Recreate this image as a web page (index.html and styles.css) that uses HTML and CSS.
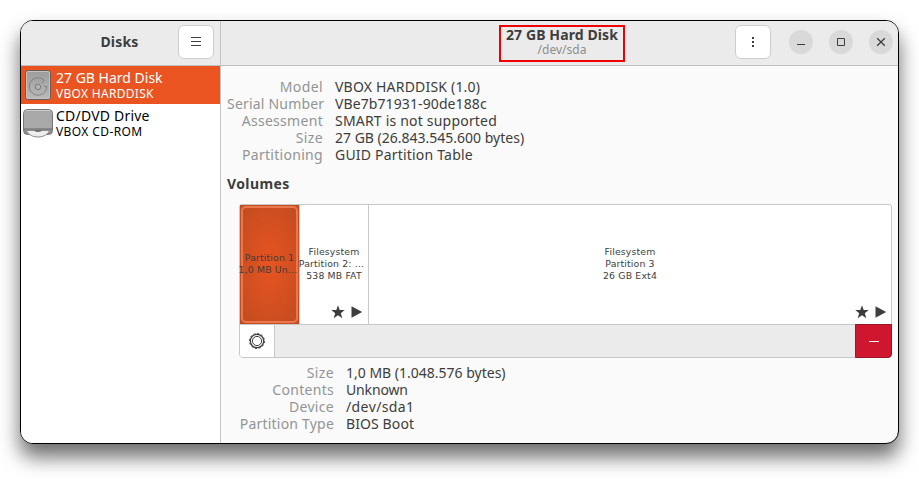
FILE: index.html
```html
<!DOCTYPE html>
<html lang="en">
<head>
<meta charset="utf-8">
<title>Disks</title>
<link rel="stylesheet" href="styles.css">
</head>
<body>
<div class="window">
  <aside class="sidebar">
    <header class="bar side-bar">
      <h1 class="title t2">Disks</h1>
      <button class="btn" aria-label="Menu">
        <svg width="12" height="12" viewBox="0 0 12 12"><path d="M1 1.500h10M1 5.500h10M1 9.500h10" stroke="#3d3d3d"/></svg>
      </button>
    </header>
    <ul class="devices">
      <li class="device selected">
        <svg class="icon" width="32" height="32" viewBox="0 0 32 32">
          <defs><linearGradient id="metal" x1="0" y1="0" x2="0" y2="1"><stop offset="0" stop-color="#9c9c9c"/><stop offset="1" stop-color="#b9b9b9"/></linearGradient></defs>
          <rect x="2.500" y="1.500" width="25" height="29" rx="2.500" fill="url(#metal)" stroke="#6e5a52"/>
          <rect x="3.500" y="2.500" width="23" height="27" rx="1.500" fill="none" stroke="#c2c2c2"/>
          <path d="M18.800 14.200l2.300-2.900A8.700 8.700 0 1 0 23.700 17.500h-2.500" fill="none" stroke="#7c7c7c" stroke-width=".9"/>
          <circle cx="15" cy="18" r="2.700" fill="#b4b4b4" stroke="#7c7c7c"/>
        </svg>
        <div><div class="name t0">27 GB Hard Disk</div><div class="sub t3">VBOX HARDDISK</div></div>
      </li>
      <li class="device">
        <svg class="icon" width="32" height="32" viewBox="0 0 32 32">
          <rect x=".5" y="3.500" width="29" height="25" rx="4" fill="#8d8d8d" stroke="#777"/>
          <path d="M1 22.500V7a3 3 0 0 1 3-3h22a3 3 0 0 1 3 3v15.500z" fill="#a8a8a8"/>
          <path d="M3 4.500h24" stroke="#cacaca"/>
          <path d="M1 23h28" stroke="#777"/>
          <path d="M3.500 24.500h23c-1.500 4-6 6.500-11.500 6.500s-10-2.500-11.500-6.500z" fill="#ededed" stroke="#8c8c8c"/>
          <path d="M11 24.500h8l-2 1.300h-4z" fill="#555"/>
        </svg>
        <div><div class="name t2">CD/DVD Drive</div><div class="sub t4">VBOX CD-ROM</div></div>
      </li>
    </ul>
  </aside>
  <main class="main">
    <header class="bar main-bar">
      <div class="heading">
        <h2 class="title t1">27 GB Hard Disk</h2>
        <div class="path">/dev/sda</div>
      </div>
      <button class="btn more" aria-label="Drive options">
        <svg width="4" height="12" viewBox="0 0 4 12"><path d="M1 1h2v2H1zM1 5h2v2H1zM1 9h2v2H1z" fill="#3d3d3d"/></svg>
      </button>
      <div class="controls">
        <button class="round" aria-label="Minimize"><svg width="10" height="10" viewBox="0 0 10 10"><path d="M1 7.500h8" stroke="#3d3d3d"/></svg></button>
        <button class="round" aria-label="Maximize"><svg width="10" height="10" viewBox="0 0 10 10"><path d="M1.500 1.500h7v7h-7z" fill="none" stroke="#3d3d3d"/></svg></button>
        <button class="round" aria-label="Close"><svg width="10" height="10" viewBox="0 0 10 10"><path d="M1.200 1.200l7.600 7.600M8.800 1.200L1.200 8.800" stroke="#3d3d3d" stroke-width="1.300"/></svg></button>
      </div>
    </header>
    <section class="content">
      <dl class="props drive">
        <dt class="t4">Model</dt><dd class="t2">VBOX HARDDISK (1.0)</dd>
        <dt class="t2">Serial Number</dt><dd class="t1">VBe7b71931-90de188c</dd>
        <dt class="t3">Assessment</dt><dd class="t2">SMART is not supported</dd>
        <dt class="t4">Size</dt><dd class="t0">27 GB (26.843.545.600 bytes)</dd>
        <dt class="t3">Partitioning</dt><dd class="t2">GUID Partition Table</dd>
      </dl>
      <h3 class="volumes-title t4">Volumes</h3>
      <div class="volumes">
        <div class="grid">
          <div class="part active"><div class="label"><span>Partition 1</span><span class="wide">1,0 MB Un…</span></div></div>
          <div class="part second">
            <div class="label"><span>Filesystem</span><span class="wide">Partition 2: …</span><span>538 MB FAT</span></div>
            <div class="marks">
              <svg width="14" height="14" viewBox="0 0 14 14"><path d="M7 .3l1.700 4.700h5L9.800 8.200l1.500 5L7 10.300l-4.300 2.900 1.500-5L.3 5h5z" fill="#3d3d3d"/></svg>
              <svg width="12" height="14" viewBox="0 0 12 14"><path d="M.500 1.200v11.600L11.200 7z" fill="#3d3d3d"/></svg>
            </div>
          </div>
          <div class="part third">
            <div class="label"><span>Filesystem</span><span>Partition 3</span><span>26 GB Ext4</span></div>
            <div class="marks">
              <svg width="14" height="14" viewBox="0 0 14 14"><path d="M7 .3l1.700 4.700h5L9.800 8.200l1.500 5L7 10.300l-4.300 2.900 1.500-5L.3 5h5z" fill="#3d3d3d"/></svg>
              <svg width="12" height="14" viewBox="0 0 12 14"><path d="M.500 1.200v11.600L11.200 7z" fill="#3d3d3d"/></svg>
            </div>
          </div>
        </div>
        <div class="tools">
          <button class="gear" aria-label="Partition options">
            <svg width="18" height="18" viewBox="0 0 18 18" fill="none" stroke="#3d3d3d">
              <circle cx="9" cy="9" r="4.600" stroke-width="1"/>
              <circle cx="9" cy="9" r="6.700" stroke-width="1.200"/>
              <circle cx="9" cy="9" r="7.500" stroke-width="1" stroke-dasharray="2.100 1.827"/>
            </svg>
          </button>
          <button class="remove" aria-label="Delete partition"><svg width="10" height="2" viewBox="0 0 10 2"><path d="M0 1.500h10" stroke="#fff"/></svg></button>
        </div>
      </div>
      <dl class="props partition">
        <dt class="t4">Size</dt><dd class="t0">1,0 MB (1.048.576 bytes)</dd>
        <dt class="t3">Contents</dt><dd class="tn">Unknown</dd>
        <dt class="t3">Device</dt><dd class="t4">/dev/sda1</dd>
        <dt class="t2">Partition Type</dt><dd class="t1">BIOS Boot</dd>
      </dl>
    </section>
  </main>
</div>
</body>
</html>
```
FILE: styles.css
```css
* { box-sizing: border-box; }
body {
  margin: 0;
  padding: 20px;
  height: 479px;
  overflow: hidden;
  background: #fff;
  color: #3d3d3d;
  font: 14px/17px "Noto Sans", sans-serif;
}
h1, h2, h3, dl, dd, ul { margin: 0; padding: 0; font-size: inherit; }
button { padding: 0; border: 0; display: flex; flex: none; align-items: center; justify-content: center; }
svg { display: block; flex: none; }

.tn { letter-spacing: -.15px; }
.t0 { letter-spacing: 0; }
.t1 { letter-spacing: .1px; }
.t2 { letter-spacing: .2px; }
.t3 { letter-spacing: .3px; }
.t4 { letter-spacing: .4px; }

.window {
  display: flex;
  width: 879px;
  height: 424px;
  border: 1px solid #000;
  border-radius: 13px;
  overflow: hidden;
  background: #fafafa;
  box-shadow: 0 13px 20px rgba(0, 0, 0, .58);
}
.bar {
  display: flex;
  align-items: center;
  height: 45px;
  background: #ebebeb;
  border-bottom: 1px solid #bfbfbf;
}
.title { font-weight: 700; }

.sidebar { width: 200px; background: #fff; border-right: 1px solid #c4c4c4; }
.side-bar { padding: 0 6px 2px 0; }
.side-bar .title { flex: 1; text-align: center; padding: 0 0 2px 40px; }
.btn {
  width: 36px;
  height: 34px;
  background: #fff;
  border: 1px solid #cdcdcd;
  border-radius: 6px;
}
.devices { list-style: none; }
.device { display: flex; height: 38px; padding: 3px 0 0 2px; color: #000; }
.device .icon { margin-right: 1px; }
.device:not(.selected) .icon { margin-top: -1px; }
.name { line-height: 17px; }
.sub { font-size: 12px; line-height: 15px; }
.selected { background: #e95420; color: #fff; }

.main { flex: 1; min-width: 0; }
.main-bar { justify-content: flex-end; padding: 0 5px 2px 0; }
.heading {
  flex: none;
  width: 126px;
  height: 37px;
  margin-top: 2px;
  border: 2px solid #f00000;
  text-align: center;
}
.heading .title { line-height: 15px; }
.path { font-size: 12px; line-height: 16px; color: #8b8e8f; }
.more { margin: 0 18px 0 110px; }
.controls { display: flex; gap: 16px; }
.round { width: 24px; height: 24px; border-radius: 50%; background: #d9d9d9; }

.content { padding: 12px 6px 0; }
.props { display: grid; column-gap: 12px; white-space: nowrap; }
.props dt { text-align: right; color: #929595; }
.drive { grid-template-columns: 96px 1fr; }
.volumes-title { margin-top: 12px; }
.volumes {
  width: 653px;
  height: 154px;
  margin: 12px 0 6px 12px;
  border: 1px solid #c8c8c8;
  border-radius: 3px 3px 4px 4px;
}
.grid { display: flex; height: 119px; background: #fff; border-radius: 3px 3px 0 0; }
.part {
  position: relative;
  display: flex;
  align-items: center;
  justify-content: center;
  padding-bottom: 2px;
  font: 9.333px/12px "DejaVu Sans", sans-serif;
  letter-spacing: .15px;
  white-space: nowrap;
}
.label { display: flex; flex-direction: column; align-items: center; }
.active {
  width: 59px;
  background: radial-gradient(ellipse at center, #e95420 0%, #c34c21 90%);
}
.active::before {
  content: "";
  position: absolute;
  inset: 1px;
  border: 2px solid #e9784f;
  border-radius: 5px;
}
.active .label { position: relative; }
.active .wide { margin-right: 3px; }
.second { width: 70px; border-left: 1px solid #c8c8c8; border-right: 1px solid #c8c8c8; }
.second .wide { margin-right: 5px; }
.third { flex: 1; }
.marks { position: absolute; right: 5px; bottom: 5px; display: flex; gap: 6px; }
.third .marks { right: 4px; }
.tools {
  display: flex;
  justify-content: space-between;
  height: 33px;
  background: #ebebeb;
  border-top: 1px solid #c8c8c8;
  border-radius: 0 0 3px 3px;
}
.gear { width: 35px; padding-bottom: 1px; background: #fff; border-right: 1px solid #c8c8c8; border-radius: 0 0 0 3px; }
.remove {
  width: 37px;
  margin: -1px -1px -1px 0;
  background: #d0162e;
  border: 1px solid #98152a;
  border-radius: 0 0 4px 0;
}
.partition { grid-template-columns: 107px 1fr; }
```
